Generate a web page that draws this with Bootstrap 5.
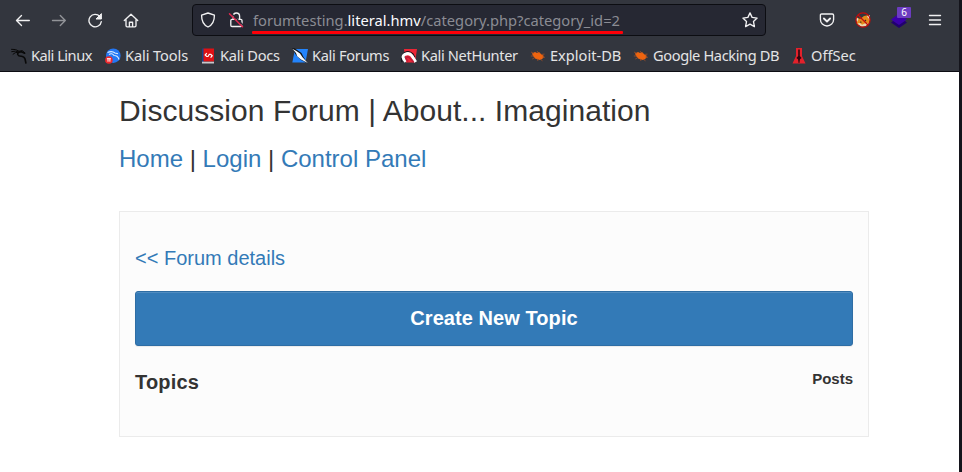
<!DOCTYPE html>
<html lang="en">
<head>
<meta charset="utf-8">
<meta name="viewport" content="width=device-width, initial-scale=1">
<title>Discussion Forum</title>
<link href="https://cdn.jsdelivr.net/npm/bootstrap@5.3.0/dist/css/bootstrap.min.css" rel="stylesheet">
<style>
body{font-family:"Liberation Sans",Arial,sans-serif;color:#333;background:#fff;height:472px;overflow:hidden}
.window{height:472px;border-right:3px solid #14141b}
.chrome{height:72px;background:#33363e;border-bottom:1px solid #0c0c13;font-family:"Noto Sans",sans-serif;color:#e4e4e5}
.toolbar{height:40px;padding-left:15px}
.toolbar svg,.marks svg{display:block;flex:none;width:16px;height:16px}
.line-icon{fill:none;stroke:#f1f1f2;stroke-width:1.35;stroke-linecap:round;stroke-linejoin:round}
.nav-icons{gap:20px;width:177px}
.urlbar{width:574px;height:32px;background:#262833;border:1px solid #0c0d12;border-radius:4px;padding:0 7px}
.lock{margin-left:12px}
.address{width:370px;height:29px;margin:2px 0 0 9px;font-size:14.7px;line-height:27px;color:#8b8c93;white-space:nowrap;position:relative}
.address b{font-weight:400;color:#fbfbfe}
.address::after{content:"";position:absolute;left:-1px;right:0;top:24.5px;height:3px;background:#ff0008;border-radius:1px}
.tools{gap:20px;margin-left:53px}
.counter{position:absolute;left:6px;top:-5px;width:14px;height:11px;background:#6c3cc0;border-radius:1px;font-size:10px;line-height:11px;text-align:center;color:#fff}
.marks{height:31px;padding-left:11px;font-size:14.6px;line-height:31px;white-space:nowrap}
.marks>div{display:flex;align-items:center;gap:4px}
.mark-linux{width:94px;letter-spacing:-.48px}.mark-tools{width:95px;letter-spacing:-.1px}.mark-docs{width:92px;letter-spacing:-.25px}.mark-forums{width:109px;letter-spacing:-.32px}.mark-hunter{width:129px;letter-spacing:-.34px}.mark-exploit{width:103px}.mark-google{width:158px;letter-spacing:-.38px}
.forum{width:750px;margin-left:119px;padding-top:19px}
.forum a{color:#337ab7;text-decoration:none}
.forum h1{font-size:30px;font-weight:400;line-height:40px;margin:0 0 11px;white-space:nowrap;letter-spacing:.045px}
.forum h2{font-size:24px;font-weight:400;line-height:34px;margin:0 0 35px;white-space:nowrap}
.panel-box{height:226px;background:#fcfcfc;border:1px solid #ebebeb;padding:33px 15px 0}
.back{font-size:20px;line-height:26px;height:46px}
.forum .btn-topic{height:55px;background:#337ab7;border:1px solid #2e6da4;border-radius:3px;color:#fff;font-size:20px;font-weight:700;padding:0 0 1px;line-height:52px;letter-spacing:.07px;box-shadow:inset 0 1px 0 rgba(255,255,255,.15),0 1px 1px rgba(0,0,0,.075)}
.topics{font-size:20px;line-height:30px;margin-top:21px;letter-spacing:.2px}
.posts{font-size:15px;line-height:24px;letter-spacing:0}
</style>
<script src="https://cdn.jsdelivr.net/npm/bootstrap@5.3.0/dist/js/bootstrap.bundle.min.js"></script>
</head>
<body>
<div class="window">
<header class="chrome">
  <div class="toolbar d-flex align-items-center">
    <div class="nav-icons d-flex">
      <svg class="line-icon" viewBox="0 0 16 16"><path d="M14.3 8.5H1.5M6.5 3.5l-5 5 5 5"/></svg>
      <svg class="line-icon opacity-50" viewBox="0 0 16 16"><path d="M1.5 8.5h12.8M9.3 3.5l5 5-5 5"/></svg>
      <svg class="line-icon" viewBox="0 0 16 16"><path d="M12.9 4.6A6.2 6.2 0 1 0 14.3 9.6"/><path d="M14.4 2v5H9.4z" fill="#f1f1f2" stroke-width="1"/></svg>
      <svg class="line-icon" viewBox="0 0 16 16"><path d="M1.3 8.5L8 2.2l6.7 6.3M3 7.5v6.1q0 1.2 1.2 1.2h7.6q1.2 0 1.2-1.2V7.5M6.4 14.5v-4.3h3.2v4.3"/></svg>
    </div>
    <div class="urlbar d-flex align-items-center">
      <svg class="line-icon" viewBox="0 0 16 16"><path d="M8 1L14.4 3.2C14.5 9 12.6 12.8 8 15 3.4 12.8 1.5 9 1.6 3.2z"/></svg>
      <svg class="line-icon lock" viewBox="0 0 16 16"><path d="M5.2 7.3V4.2a3.2 3.2 0 0 1 6.4 0v3.1M4 7.3h8.8q1.2 0 1.2 1.2v4.8q0 1.2-1.2 1.2H4q-1.2 0-1.2-1.2V8.5Q2.8 7.3 4 7.3"/><path d="M3.4 1.4L15 13" stroke="#262833" stroke-width="1.4"/><path d="M1.5 1.7L14.5 14.7" stroke="#e22850" stroke-width="1.5"/></svg>
      <div class="address">forumtesting.<b>literal.hmv</b>/category.php?category_id=2</div>
      <svg class="line-icon ms-auto" viewBox="0 0 16 16"><path d="M8 .9l2.1 4.5 5 .7-3.6 3.5.9 5L8 12.2l-4.4 2.4.9-5L.9 6.1l5-.7z"/></svg>
    </div>
    <div class="tools d-flex">
      <svg class="line-icon" viewBox="0 0 16 16"><path d="M2.7 2h10.6q1.3 0 1.3 1.3V7.4a6.6 6.6 0 0 1-13.2 0V3.3Q1.4 2 2.7 2z"/><path d="M4.9 6.5L8 9.5l3.1-3" stroke-width="1.8"/></svg>
      <svg viewBox="0 0 16 16"><path d="M1 5l4 2 4-3 5-1 1 5-2 5-6 1.5L2 12z" fill="#e58a1c"/><path d="M.8 5L3.5 7 2 10zM14.8 3L12 4.5 15 8z" fill="#e9dfd6"/><path d="M2 11.5l3-.5 2 1.8 4-1.8 2.5.5-3 2.7-4 .5z" fill="#e9d8b0"/><path d="M5 10l1.5.3M11 8L9.8 9" stroke="#3b2920" stroke-width="1.1"/><circle cx="8" cy="8" r="7.1" fill="none" stroke="#c20c0c" stroke-width="1.1"/><path d="M3 3l10 10" stroke="#c20c0c" stroke-width="1.2"/></svg>
      <div class="position-relative"><svg viewBox="0 0 16 16"><path d="M0 10.5l8-6 8 6-8 5.5z" fill="#22006f"/><path d="M0 7.5l8-6 8 6-8 5.5z" fill="#3b00a8"/></svg><span class="counter">6</span></div>
      <svg class="line-icon" viewBox="0 0 16 16"><path d="M2.5 3.5h11M2.5 8h11M2.5 12.5h11"/></svg>
    </div>
  </div>
  <nav class="marks d-flex">
    <div class="mark-linux"><svg viewBox="0 0 16 16" fill="none" stroke="#090909" stroke-linecap="round"><path d="M.5 1.3Q5 .8 8 3.2l3.2-.6 2.6 2.2M.7 3.6Q4.6 2.3 8 4M2 6.2Q4 4 7 4.2" stroke-width="1"/><path d="M13.6 5.2L10.5 3.8Q6.2 4 6.7 6.5 7.5 8.3 10.5 8.2q3 .4 3.6 3l.8 3.8" stroke-width="1.6"/></svg>Kali Linux</div>
    <div class="mark-tools"><svg viewBox="0 0 16 16"><circle cx="8.3" cy="7.7" r="7.3" fill="#2477f4"/><path d="M2.5 4.5Q7 2.5 10 5l3 .7M4 6.5Q7 4.5 9 7.5q4 0 5 4" stroke="#d9ebff" stroke-width="1.1" fill="none"/><circle cx="3.9" cy="12" r="3.8" fill="#ee292d"/><path d="M1.9 10.7h4M3 10.7v3M4.9 10.7v3" stroke="#fff" stroke-width="1"/></svg>Kali Tools</div>
    <div class="mark-docs"><svg viewBox="0 0 16 16"><path d="M2 .5h2V15H2z" fill="#19428a"/><path d="M3.5 .5H14v13H3.5z" fill="#df1115"/><path d="M2 13.7h12v1.8H2z" fill="#c8c8cc"/><path d="M6.8 5.2L5.2 7l1.5 1.5H8l1.3-2.2h1.5l1.4 1.5-1.6 1.8" stroke="#fff" stroke-width="1.2" fill="none"/></svg>Kali Docs</div>
    <div class="mark-forums"><svg viewBox="0 0 16 16"><path d="M3 1h13l-2.5 13.5H.3z" fill="#2384fc"/><path d="M0 .3h2.5L9.5 5l2 4 4.3 6.2L9 12 4 7z" fill="#101318"/><path d="M.3.8L4 2.8 8 5.5l2.5 3.8L15.8 15 9 11.5 5.2 8.2 4 5z" fill="#f7fbff"/></svg>Kali Forums</div>
    <div class="mark-hunter"><svg viewBox="0 0 16 16"><path d="M3 1h13l-2 13.5H5z" fill="#ed2636"/><path d="M1 14Q-.5 7.5 3.5 4.7 8 2 12 6l1.8 3.3" fill="none" stroke="#11131a" stroke-width="1.2"/><path d="M4.8 13.7Q-.3 8.7 4 6.3q4.5-2 7 1.7l3.7 6" fill="none" stroke="#fff" stroke-width="3"/><path d="M7 13.5Q3.4 9.7 6.4 8.8q2 0 6.1 5.2" fill="none" stroke="#c21d38" stroke-width="1.8"/></svg>Kali NetHunter</div>
    <div class="mark-exploit"><svg viewBox="0 0 16 16"><path d="M2 5.5L5 4l2 1 2-1 3 3 1.5.6v2.2L12 11l-2 1-4.5-1.2L3 8z" fill="#ee640f"/><path d="M1 4l3 1.5M7 3l2 2.5M11 6.5l3.5-.4M12 9l3 .3M10 11l2.5 1.8M7 10.5L8 13M4 8L.8 8M5 9.5L2.3 11" stroke="#ad5122" stroke-width=".7"/></svg>Exploit-DB</div>
    <div class="mark-google"><svg viewBox="0 0 16 16"><path d="M2 5.5L5 4l2 1 2-1 3 3 1.5.6v2.2L12 11l-2 1-4.5-1.2L3 8z" fill="#ee640f"/><path d="M1 4l3 1.5M7 3l2 2.5M11 6.5l3.5-.4M12 9l3 .3M10 11l2.5 1.8M7 10.5L8 13M4 8L.8 8M5 9.5L2.3 11" stroke="#ad5122" stroke-width=".7"/></svg>Google Hacking DB</div>
    <div><svg viewBox="0 0 16 16"><path d="M5 0h6v8l3.5 7.5h-13L5 8z" fill="#e4212b"/><path d="M7.2 2l.8-1 .8 1v6l1.8 2-1.6 1.2L8.4 15h-.8l-.6-3.8L5.4 10l1.8-2z" fill="#2c080e"/></svg>OffSec</div>
  </nav>
</header>
<main class="forum">
  <h1>Discussion Forum | About... Imagination</h1>
  <h2><a href="#">Home</a> | <a href="#">Login</a> | <a href="#">Control Panel</a></h2>
  <section class="panel-box">
    <div class="back"><a href="#">&lt;&lt; Forum details</a></div>
    <button class="btn btn-topic w-100 d-block" type="button">Create New Topic</button>
    <div class="topics d-flex justify-content-between fw-bold"><span>Topics</span><span class="posts">Posts</span></div>
  </section>
</main>
</div>
</body>
</html>
